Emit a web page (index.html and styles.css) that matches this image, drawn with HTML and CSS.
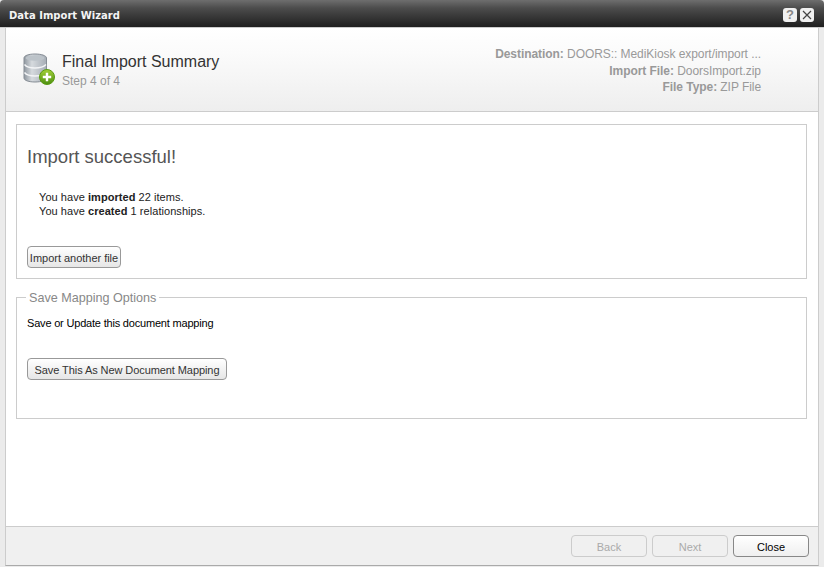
FILE: index.html
```
<!DOCTYPE html>
<html lang="en">
<head>
<meta charset="utf-8">
<title>Data Import Wizard</title>
<link rel="stylesheet" href="styles.css">
</head>
<body>
<div class="window">
  <div class="titlebar">
    <span class="title">Data Import Wizard</span>
    <div class="tools">
      <span class="tool tool-help">?</span>
      <span class="tool"><svg width="12" height="12" viewBox="0 0 12 12"><path d="M2 2l8 8M10 2l-8 8" stroke="#444" stroke-width="1.2" fill="none"/></svg></span>
    </div>
  </div>
  <div class="frame">
    <div class="body">
      <header class="head">
        <svg class="dbicon" width="32" height="32" viewBox="0 0 32 32">
          <defs>
            <linearGradient id="cyl" x1="0" x2="1" y1="0" y2="0"><stop offset="0" stop-color="#8f979f"/><stop offset=".35" stop-color="#d6dade"/><stop offset="1" stop-color="#a6adb5"/></linearGradient>
            <linearGradient id="grn" x1="0" x2="0" y1="0" y2="1"><stop offset="0" stop-color="#a4d038"/><stop offset="1" stop-color="#4c8f10"/></linearGradient>
          </defs>
          <path d="M1 5C1 2.500 6 1 12 1s11.500 1.500 11.500 4v20c0 2.500-5.500 4-11.500 4S1 27.500 1 25z" fill="url(#cyl)" stroke="#868d95" stroke-width="1"/>
          <ellipse cx="12" cy="5" rx="9.500" ry="2.800" fill="#bcc3c9"/>
          <path d="M1.500 11.500c2 2.500 5.500 3.500 10.500 3.500s8.500-1 11-3.500M1.500 19.500c2 2.500 5.500 3.500 10.500 3.500s8.500-1 11-3.500" fill="none" stroke="#f3f4f6" stroke-width="1.500"/>
          <circle cx="24" cy="24" r="7.500" fill="url(#grn)" stroke="#5a9a12"/>
          <path d="M24 19.800v8.400M19.800 24h8.400" stroke="#fff" stroke-width="2.400"/>
        </svg>
        <div class="headings">
          <div class="h-title">Final Import Summary</div>
          <div class="h-step">Step 4 of 4</div>
        </div>
        <div class="meta">
          <div><b>Destination:</b> DOORS:: MediKiosk export/import ...</div>
          <div><b>Import File:</b> DoorsImport.zip</div>
          <div><b>File Type:</b> ZIP File</div>
        </div>
      </header>
      <main class="content">
        <section class="panel result">
          <h2 class="success">Import successful!</h2>
          <p class="lines">You have <b>imported</b> 22 items.<br>You have <b>created</b> 1 relationships.</p>
          <button class="btn btn-small" type="button">Import another file</button>
        </section>
        <fieldset class="panel mapping">
          <legend>Save Mapping Options</legend>
          <p class="note">Save or Update this document mapping</p>
          <button class="btn btn-save" type="button">Save This As New Document Mapping</button>
        </fieldset>
      </main>
      <footer class="foot">
        <button class="btn btn-foot" type="button" disabled>Back</button>
        <button class="btn btn-foot" type="button" disabled>Next</button>
        <button class="btn btn-foot" type="button">Close</button>
      </footer>
    </div>
  </div>
</div>
</body>
</html>
```
FILE: styles.css
```
* { box-sizing: border-box; }
html, body { margin: 0; height: 100%; overflow: hidden; }
body { font-family: "Liberation Sans", Arial, sans-serif; font-size: 11px; color: #000; }
.window { width: 824px; height: 567px; display: flex; flex-direction: column; background: #e8e8e8; }
.titlebar { height: 28px; flex: none; display: flex; align-items: center; justify-content: space-between; padding: 2px 10px 0 9px; background: linear-gradient(#6e6e6e 0, #4c4c4c 30%, #1f1f1f 100%); border-bottom: 1px solid #ccc; border-radius: 4px 4px 0 0; }
.title { color: #f4f4f4; font: bold 10px "DejaVu Sans", sans-serif; letter-spacing: .02px; padding-top: 1px; }
.tools { display: flex; gap: 3px; }
.tool { width: 14px; height: 14px; background: #f0f0f0; border-radius: 3px; display: flex; align-items: center; justify-content: center; font: bold 13px "Liberation Sans", sans-serif; color: #888; }
.frame { flex: 1; padding: 0 5px 1px 5px; display: flex; min-height: 0; background: #ebebeb; }
.body { flex: 1; display: flex; flex-direction: column; background: #fff; border-left: 1px solid #ccc; border-right: 1px solid #ccc; border-bottom: 1px solid #aaa; }
.head { height: 84px; flex: none; display: flex; align-items: flex-start; padding: 25px 57px 0 17px; background: linear-gradient(#fff 0, #fbfbfb 30%, #eee 100%); border-bottom: 1px solid #ccc; }
.dbicon { flex: none; margin-right: 7px; }
.headings { flex: none; }
.h-title { font-size: 16px; line-height: 18px; color: #333; }
.h-step { font-size: 12px; line-height: 15px; margin-top: 3px; color: #999; }
.meta { margin-left: auto; text-align: right; color: #999; font-size: 12px; line-height: 16.500px; margin-top: -7px; letter-spacing: -.06px; }
.content { flex: 1; padding: 12px 11px 0 10px; min-height: 0; }
.panel { border: 1px solid #ccc; background: #fff; margin: 0; }
.result { height: 155px; padding: 21px 10px 0; }
.success { margin: 0; font-size: 18.500px; line-height: 21px; font-weight: normal; color: #555; }
.lines { margin: 23px 0 0 12px; font-size: 11px; line-height: 14px; color: #222; letter-spacing: .05px; }
.btn { display: block; font-family: "Liberation Sans", sans-serif; font-size: 11px; color: #333; border: 1px solid #999; border-radius: 4px; background: linear-gradient(#fff, #e6e6e6); padding: 1px 0 0; white-space: nowrap; }
.btn-small { width: 94px; height: 22px; margin-top: 28px; letter-spacing: -.02px; }
.mapping { height: 130px; margin-top: 10px; padding: 0 10px; }
.mapping legend { font-size: 12.600px; color: #888; padding: 2px 3px 0; margin-left: -1px; line-height: 14px; }
.note { margin: 11px 0 0; font-size: 11px; line-height: 14px; letter-spacing: -.19px; }
.btn-save { width: 200px; height: 22px; margin-top: 28px; letter-spacing: -.08px; }
.foot { height: 39px; flex: none; display: flex; justify-content: flex-end; gap: 5px; padding: 8px 9px 0 0; background: #f0f0f0; border-top: 1px solid #ccc; }
.btn-foot { width: 76px; height: 22px; background: linear-gradient(#fff, #efefef); color: #000; border-color: #888; }
.btn-foot:disabled { color: #aaa; border-color: #ccc; background: #f0f0f0; }
```
